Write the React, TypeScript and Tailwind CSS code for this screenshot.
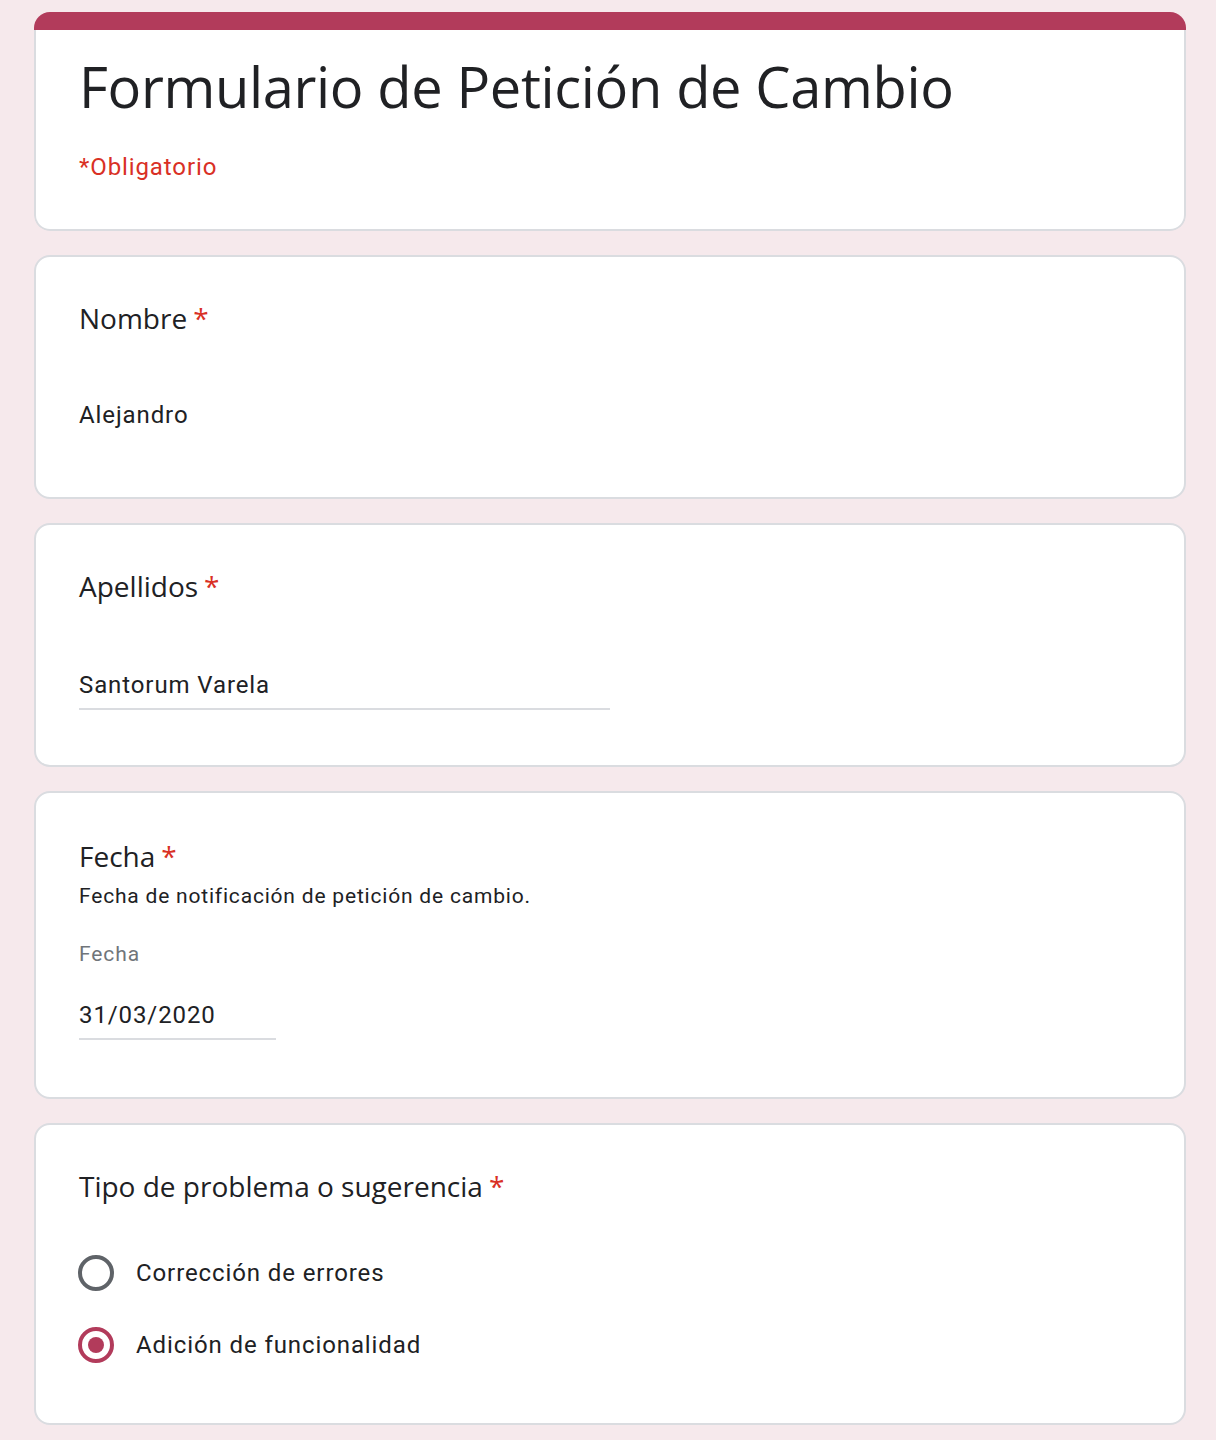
import React from "react";

const heading = { fontFamily: '"Open Sans", "Noto Sans", sans-serif' };
const body = { fontFamily: 'Roboto, "Liberation Sans", sans-serif' };

function Required() {
  return <span className="ml-[6px] text-[#d93025]">*</span>;
}

function Card({ className = "", children }: { className?: string; children: React.ReactNode }) {
  return (
    <div className={`rounded-[16px] border-2 border-[#dadce0] bg-white px-[43px] ${className}`}>
      {children}
    </div>
  );
}

function QuestionTitle({ children }: { children: React.ReactNode }) {
  return (
    <div className="text-[28px] leading-[40px] tracking-[0px] text-[#202124]" style={heading}>
      {children}
      <Required />
    </div>
  );
}

function Radio({ label, checked }: { label: string; checked?: boolean }) {
  return (
    <div className="flex h-[48px] items-center gap-[22px]">
      {checked ? (
        <span className="-ml-px flex h-[36px] w-[36px] items-center justify-center rounded-full border-[4px] border-[#b23b5b]">
          <span className="h-[16px] w-[16px] rounded-full bg-[#b23b5b]" />
        </span>
      ) : (
        <span className="-ml-px h-[36px] w-[36px] rounded-full border-[4px] border-[#5f6368]" />
      )}
      <span className="text-[24px] leading-[36px] tracking-[0.9px] text-[#202124]" style={body}>
        {label}
      </span>
    </div>
  );
}

export default function App() {
  return (
    <div className="min-h-[1440px] bg-[#f6e9ec] pt-[12px] pr-[30px] pl-[34px]" style={body}>
      <div className="flex flex-col gap-[24px]">
        {/* header card */}
        <div className="overflow-hidden rounded-[16px]">
          <div className="h-[18px] bg-[#b23b5b]" />
          <div className="rounded-b-[16px] border-2 border-t-0 border-[#dadce0] bg-white px-[43px] pt-[22px] pb-[46px]">
            <h1 className="text-[56px] leading-[68px] tracking-[-0.35px] text-[#202124]" style={heading}>
              Formulario de Petición de Cambio
            </h1>
            <div className="mt-[31px] text-[24px] leading-[32px] tracking-[0.9px] text-[#d93025]">
              *Obligatorio
            </div>
          </div>
        </div>

        <Card className="pt-[41px] pb-[64px]">
          <QuestionTitle>Nombre</QuestionTitle>
          <div className="mt-[59px] text-[24px] leading-[36px] tracking-[0.9px] text-[#202124]">Alejandro</div>
        </Card>

        <Card className="pt-[41px] pb-[55px]">
          <QuestionTitle>Apellidos</QuestionTitle>
          <div className="mt-[61px] w-[531px] border-b-2 border-[#dadce0] pb-[5px] text-[24px] leading-[36px] tracking-[0.9px] text-[#202124]">
            Santorum Varela
          </div>
        </Card>

        <Card className="pt-[43px] pb-[57px]">
          <QuestionTitle>Fecha</QuestionTitle>
          <div className="mt-[6px] text-[21px] leading-[28px] tracking-[0.8px] text-[#202124]">
            Fecha de notificación de petición de cambio.
          </div>
          <div className="mt-[30px] text-[21px] leading-[28px] tracking-[0.9px] text-[#70757a]">Fecha</div>
          <div className="mt-[29px] w-[197px] border-b-2 border-[#dadce0] pb-[5px] text-[24px] leading-[36px] tracking-[0.9px] text-[#202124]">
            31/03/2020
          </div>
        </Card>

        <Card className="pt-[41px] pb-[54px]">
          <QuestionTitle>Tipo de problema o sugerencia</QuestionTitle>
          <div className="mt-[43px] flex flex-col gap-[24px]">
            <Radio label="Corrección de errores" />
            <Radio label="Adición de funcionalidad" checked />
          </div>
        </Card>
      </div>
    </div>
  );
}
